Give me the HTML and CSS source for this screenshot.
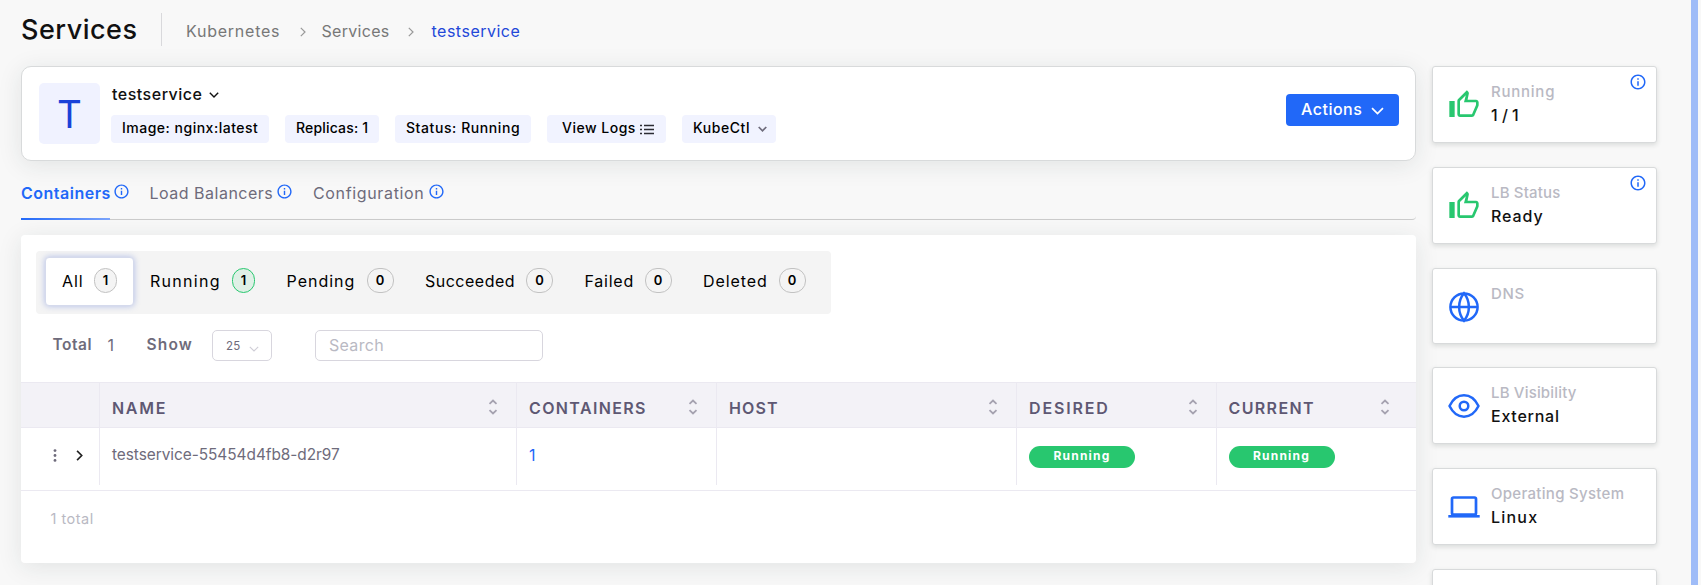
FILE: index.html
```html
<!DOCTYPE html>
<html lang="en">
<head>
<meta charset="utf-8">
<title>Services</title>
<link rel="stylesheet" href="styles.css">
</head>
<body>
<svg class="defs" width="0" height="0">
  <symbol id="down" viewBox="0 0 10 6"><path d="M.8.8 5 5 9.2.8" fill="none" stroke="currentColor"/></symbol>
  <symbol id="right" viewBox="0 0 6 10"><path d="M.8.8 5 5 .8 9.2" fill="none" stroke="currentColor"/></symbol>
  <symbol id="info" viewBox="0 0 24 24"><path fill="currentColor" d="M11 7h2v2h-2zm0 4h2v6h-2zm1-9C6.480 2 2 6.480 2 12s4.480 10 10 10 10-4.480 10-10S17.520 2 12 2zm0 18c-4.410 0-8-3.590-8-8s3.590-8 8-8 8 3.590 8 8-3.590 8-8 8z"/></symbol>
  <symbol id="sort" viewBox="0 0 10 16"><path d="M1.500 4.800 5 1.500l3.500 3.300M1.500 11.200 5 14.500l3.500-3.300" fill="none" stroke="currentColor" stroke-width="1.800"/></symbol>
  <symbol id="thumb" viewBox="0 0 24 24"><path fill="currentColor" d="M9 21h9c.83 0 1.540-.5 1.840-1.220l3.020-7.050c.09-.23.14-.47.14-.73v-2c0-1.100-.9-2-2-2h-6.310l.95-4.570.03-.32c0-.41-.17-.79-.44-1.060L14.170 1 7.580 7.590C7.220 7.950 7 8.450 7 9v10c0 1.100.9 2 2 2zM9 9l4.340-4.340L12 10h9v2l-3 7H9V9zM1 9h4v12H1z"/></symbol>
</svg>
<div class="page">
  <div class="main">
    <header class="head">
      <h1 class="title ls5">Services</h1>
      <nav class="crumbs">
        <span class="crumb c1 ls8">Kubernetes</span>
        <svg class="sep s1"><use href="#right"/></svg>
        <span class="crumb c2 ls3">Services</span>
        <svg class="sep s2"><use href="#right"/></svg>
        <span class="crumb here ls5">testservice</span>
      </nav>
    </header>

    <section class="card">
      <div class="avatar">T</div>
      <div class="info">
        <div class="name"><span class="name-text ls5">testservice</span><svg class="name-arrow"><use href="#down"/></svg></div>
        <div class="chips">
          <span class="chip w1 ls5">Image: nginx:latest</span>
          <span class="chip w2 ls2">Replicas: 1</span>
          <span class="chip w3 ls6">Status: Running</span>
          <span class="chip w4 ls5">View Logs<svg class="list" viewBox="0 0 14 11"><path d="M4 1.500h10M4 5.500h10M4 9.500h10" stroke="#2b2b33" stroke-width="1.400"/><path d="M0 1.500h2M0 5.500h2M0 9.500h2" stroke="#2b2b33" stroke-width="1.300"/></svg></span>
          <span class="chip w5 ls6">KubeCtl<svg class="chip-arrow"><use href="#down"/></svg></span>
        </div>
      </div>
      <button class="actions"><span class="ls5">Actions</span><svg class="act-arrow"><use href="#down"/></svg></button>
    </section>

    <nav class="tabs">
      <span class="tab on"><span class="tab-text t1 ls5">Containers</span><svg class="tip"><use href="#info"/></svg></span>
      <span class="tab"><span class="tab-text t2 ls5">Load Balancers</span><svg class="tip"><use href="#info"/></svg></span>
      <span class="tab"><span class="tab-text t3 ls7">Configuration</span><svg class="tip"><use href="#info"/></svg></span>
    </nav>

    <section class="panel">
      <div class="filters">
        <span class="filter sel"><span class="f1 ls9">All</span><b class="badge one">1</b></span>
        <span class="filter"><span class="f2 ls13">Running</span><b class="badge one green">1</b></span>
        <span class="filter"><span class="f3 ls10">Pending</span><b class="badge">0</b></span>
        <span class="filter"><span class="f4 ls5">Succeeded</span><b class="badge">0</b></span>
        <span class="filter"><span class="f5 ls8">Failed</span><b class="badge">0</b></span>
        <span class="filter"><span class="f6 ls9">Deleted</span><b class="badge">0</b></span>
      </div>
      <div class="controls">
        <span class="total ls5">Total</span><span class="count">1</span>
        <span class="show ls12">Show</span>
        <span class="select">25<svg class="sel-arrow"><use href="#down"/></svg></span>
        <input class="search ls3" placeholder="Search">
      </div>
      <div class="row thead">
        <span class="cell"></span>
        <span class="cell"><span class="ls17">NAME</span><svg class="sort"><use href="#sort"/></svg></span>
        <span class="cell"><span class="ls14">CONTAINERS</span><svg class="sort"><use href="#sort"/></svg></span>
        <span class="cell"><span class="ls11">HOST</span><svg class="sort"><use href="#sort"/></svg></span>
        <span class="cell"><span class="ls18">DESIRED</span><svg class="sort"><use href="#sort"/></svg></span>
        <span class="cell last"><span class="ls14">CURRENT</span><svg class="sort"><use href="#sort"/></svg></span>
      </div>
      <div class="row item">
        <span class="cell tools"><svg class="dots" viewBox="0 0 4 13"><g fill="#6e6b7b"><circle cx="2" cy="1.600" r="1.400"/><circle cx="2" cy="6.500" r="1.400"/><circle cx="2" cy="11.400" r="1.400"/></g></svg><svg class="expand"><use href="#right"/></svg></span>
        <span class="cell pod">testservice-55454d4fb8-d2r97</span>
        <span class="cell link">1</span>
        <span class="cell"></span>
        <span class="cell"><span class="pill">Running</span></span>
        <span class="cell last"><span class="pill">Running</span></span>
      </div>
      <div class="foot ls5">1 total</div>
    </section>
  </div>

  <aside class="side">
    <div class="stat green-ico"><svg class="ico"><use href="#thumb"/></svg><div><div class="label ls8">Running</div><div class="value">1 / 1</div></div><svg class="corner"><use href="#info"/></svg></div>
    <div class="stat green-ico"><svg class="ico"><use href="#thumb"/></svg><div><div class="label ls2">LB Status</div><div class="value ls9">Ready</div></div><svg class="corner"><use href="#info"/></svg></div>
    <div class="stat short"><svg class="ico" viewBox="0 0 32 32" fill="none" stroke="currentColor" stroke-width="2.500"><circle cx="16" cy="16" r="13.600"/><path d="M2.300 16h27.400M16 2.300c-6.500 7.900-6.500 19.500 0 27.400 6.500-7.900 6.500-19.500 0-27.400z"/></svg><div><div class="label ls7">DNS</div></div></div>
    <div class="stat"><svg class="ico" viewBox="0 0 32 32" fill="none" stroke="currentColor" stroke-width="2.500"><path d="M1.500 16C8.500 1.800 23.500 1.800 30.500 16 23.500 30.200 8.500 30.200 1.500 16z" stroke-linejoin="round"/><circle cx="16" cy="16" r="4.300"/></svg><div><div class="label ls2">LB Visibility</div><div class="value ls8">External</div></div></div>
    <div class="stat"><svg class="ico" viewBox="0 0 32 32" fill="none" stroke="currentColor" stroke-width="2.700"><rect x="4" y="6.500" width="24" height="17" rx="1.500"/><path d="M.3 25.300h31.400" stroke-width="2.600"/></svg><div><div class="label ls3">Operating System</div><div class="value ls12">Linux</div></div></div>
    <div class="stat"></div>
  </aside>
  <div class="rail"></div>
</div>
</body>
</html>
```
FILE: styles.css
```css
* { box-sizing: border-box; }
body { margin: 0; background: #f8f8f8; font: 16px/20px Inter, "Open Sans", sans-serif; color: #111; height: 585px; overflow: hidden; }
.defs { position: absolute; }
svg { display: block; flex: none; }
.page { display: flex; height: 585px; padding-left: 21px; overflow: hidden; }
.main { width: 1395px; flex: none; }

.ls2 { letter-spacing: .18px; } .ls3 { letter-spacing: .3px; } .ls5 { letter-spacing: .5px; }
.ls6 { letter-spacing: .58px; } .ls7 { letter-spacing: .65px; } .ls8 { letter-spacing: .76px; }
.ls9 { letter-spacing: .9px; } .ls10 { letter-spacing: 1px; } .ls11 { letter-spacing: 1.1px; }
.ls12 { letter-spacing: 1.2px; } .ls13 { letter-spacing: 1.3px; } .ls14 { letter-spacing: 1.37px; }
.ls17 { letter-spacing: 1.7px; } .ls18 { letter-spacing: 1.85px; }

.head { display: flex; height: 66px; padding-top: 13px; }
.title { margin: 0; width: 141px; height: 33px; font-size: 27px; line-height: 34px; font-weight: 500; border-right: 1px solid #d9d9dc; }
.crumbs { display: flex; padding: 8px 0 0 24px; }
.crumb { color: #777; white-space: nowrap; }
.c1 { width: 113.500px; }
.c2 { width: 86px; }
.sep { width: 6px; height: 10px; margin-top: 6px; color: #999; stroke-width: 1.2; }
.s1 { margin-right: 16px; }
.s2 { margin-right: 18px; }
.here { color: #2348d8; }

.card { display: flex; height: 95px; padding: 16px 16px 0 17px; background: #fff; border: 1px solid #d8dadb; border-radius: 10px; box-shadow: 0 4px 24px rgba(34,50,45,.1); }
.avatar { width: 61px; height: 61px; border-radius: 5px; background: #f0f2ff; color: #1a41d8; font-size: 38.500px; line-height: 62px; text-align: center; }
.info { flex: 1; padding: 1px 0 0 11px; }
.name { display: flex; padding-left: 1px; font-weight: 500; }
.name-text { width: 89.500px; }
.name-arrow { width: 10px; height: 6px; margin: 8px 0 0 7px; stroke-width: 1.400; }
.chips { display: flex; gap: 16px; margin-top: 11px; }
.chip { display: flex; height: 28px; padding-left: 11px; border-radius: 4px; background: #f1f3ff; font-size: 14px; line-height: 26px; font-weight: 500; color: #000; white-space: nowrap; }
.w1 { width: 158px; } .w2 { width: 94px; } .w3 { width: 136px; } .w4 { width: 119px; padding-left: 15px; } .w5 { width: 94px; }
.list { width: 14px; height: 11px; margin: 9px 0 0 4px; }
.chip-arrow { width: 9px; height: 6px; margin: 11px 0 0 8px; color: #6e6b7b; stroke-width: 1.900; }
.actions { display: flex; width: 113px; height: 32px; margin-top: 11px; padding: 5px 0 0 15px; border: 0; border-radius: 4px; background: #2168f8; color: #fff; font: 500 16px/20px Inter, sans-serif; }
.act-arrow { width: 13px; height: 8px; margin: 8px 0 0 9px; stroke-width: 1.300; }

.tabs { display: flex; height: 59px; padding-top: 22px; border-bottom: 1px solid #ccc; border-radius: 0 0 4px 0; color: #6e6b7b; }
.tab { display: flex; margin-right: 20px; }
.tab-text { height: 37px; white-space: nowrap; }
.on .tab-text { border-bottom: 2px solid; border-image: linear-gradient(90deg, #2168f8, #7da5fb) 1; color: #2168f8; font-weight: 600; }
.t1 { width: 89px; } .t2 { width: 124px; } .t3 { width: 112px; }
.tip { width: 17px; height: 17px; margin: 0 0 0 2.500px; color: #2168f8; }

.panel { height: 328px; margin-top: 15px; padding-top: 16px; background: #fff; border-radius: 4px; box-shadow: 0 4px 24px rgba(34,50,45,.1); }
.filters { display: flex; width: 795px; height: 63px; margin-left: 15px; padding: 6px 0 0 9px; border-radius: 4px; background: #f4f4f4; color: #000; }
.filter { display: flex; align-items: center; height: 49px; padding: 0 15.500px 2px 16px; border: 1px solid transparent; border-width: 1px 0; }
.sel { width: 89px; border: 1px solid #d5daec; border-radius: 4px; background: #fff; padding: 0 15px 2px 16px; box-shadow: 0 0 6px rgba(75,105,210,.4); }
.f1 { width: 32px; } .f2 { width: 82px; } .f3 { width: 80px; } .f4 { width: 101px; } .f5 { width: 60px; } .f6 { width: 75.500px; }
.badge { width: 27px; height: 25px; flex: none; border: 1px solid #c2c2c2; border-radius: 12px; background: #f4f4f4; font-size: 13px; line-height: 23px; font-weight: 600; text-align: center; }
.one { width: 23px; }
.green { border-color: #28c76f; background: #dff0e6; }

.controls { display: flex; height: 31px; margin-top: 16px; padding-left: 31.500px; color: #6e6b7b; }
.total, .show, .count { padding-top: 5px; }
.total, .show { font-weight: 600; font-size: 15.500px; }
.total { width: 55px; } .count { width: 39px; } .show { width: 65.500px; white-space: nowrap; }
.select { display: flex; width: 60px; height: 31px; padding-left: 13px; border: 1px solid #d8d6de; border-radius: 5px; font-size: 11.500px; line-height: 30px; letter-spacing: .2px; }
.sel-arrow { width: 10px; height: 6px; margin: 15px 0 0 9px; color: #cfcdd6; stroke-width: 1.100; }
.search { width: 228px; height: 31px; margin-left: 43px; padding: 0 13px 1px; border: 1px solid #d8d6de; border-radius: 5px; background: #fff; font: 16px Inter, sans-serif; }
.search::placeholder { color: #b9b9c3; }

.row { display: grid; grid-template-columns: 79px 417px 200px 300px 200px 199px; border-bottom: 1px solid #ebe9f1; color: #6e6b7b; }
.cell { display: flex; justify-content: space-between; padding: 0 18.500px 0 12px; border-right: 1px solid #ebe9f1; }
.last { border-right: 0; }
.thead { height: 46px; margin-top: 21px; border-top: 1px solid #ebe9f1; background: #f3f2f7; color: #5e5873; font-weight: 600; }
.thead .cell { padding-top: 15px; }
.thead .last { padding-right: 26.500px; }
.sort { width: 10px; height: 16px; margin-top: 1px; color: #a5a2b0; }
.item { height: 63px; }
.item .cell { height: 57px; padding-top: 17px; }
.item .last, .thead .last { padding-left: 11.500px; }
.pod { font-size: 15.400px; letter-spacing: -.04px; }
.item .link { color: #2168f8; }
.item .tools { justify-content: flex-start; padding: 21px 0 0 31.500px; }
.dots { width: 4px; height: 13px; }
.expand { width: 7px; height: 11px; margin: 1px 0 0 19px; color: #222; stroke-width: 1.500; }
.pill { width: 106px; height: 22px; margin-top: 1px; border-radius: 11px; background: #28c76f; color: #fff; font-size: 12px; line-height: 20px; font-weight: 700; letter-spacing: 1.200px; text-align: center; }
.foot { padding: 18px 0 0 29.500px; font-size: 14.500px; color: #b9b9c3; }

.side { width: 225px; flex: none; margin-left: 16px; padding-top: 66px; display: flex; flex-direction: column; gap: 24px; }
.stat { position: relative; display: flex; flex: none; gap: 11px; height: 77px; padding: 15px 0 0 15px; background: #fff; border: 1px solid #d8dadb; border-radius: 3px; color: #2168f8; box-shadow: 0 2px 5px rgba(34,50,45,.14); }
.short { height: 76px; margin-bottom: -1px; }
.green-ico { color: #28c76f; }
.ico { width: 32px; height: 32px; margin-top: 7px; }
.label { color: #b9b9c3; font-size: 15px; font-weight: 500; white-space: nowrap; }
.value { color: #111; font-weight: 500; margin-top: 3px; }
.corner { position: absolute; right: 9px; top: 6px; width: 18px; height: 18px; color: #2168f8; }
.rail { width: 7px; flex: none; margin-left: 34px; background: #9fbcf8; }
```
